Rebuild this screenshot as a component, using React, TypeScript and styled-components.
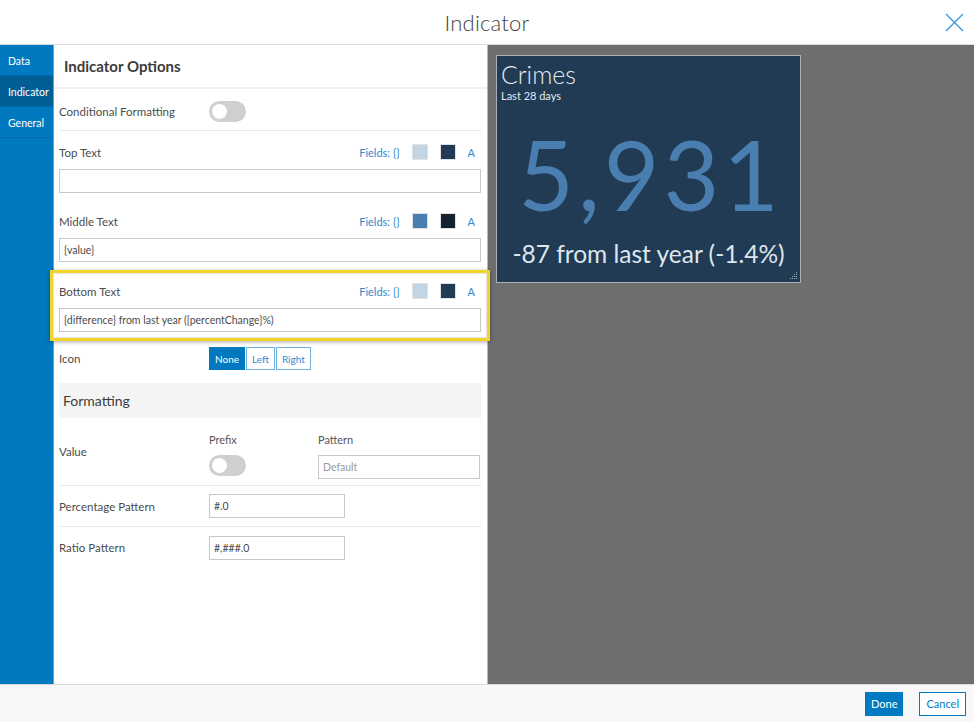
import { createGlobalStyle, styled } from 'styled-components';

const GlobalStyle = createGlobalStyle`
  html, body {
    margin: 0;
    padding: 0;
    background: #ffffff;
  }
  body {
    font-family: Lato, 'Open Sans', sans-serif;
    color: #4c4c4c;
  }
  * {
    box-sizing: border-box;
  }
`;

const tabs = ['Data', 'Indicator', 'General'];

type TextField = {
  label: string;
  value: string;
  light: string;
  dark: string;
};

const topText: TextField = { label: 'Top Text', value: '', light: '#c3d4e3', dark: '#213b54' };
const middleText: TextField = { label: 'Middle Text', value: '{value}', light: '#4a7db0', dark: '#14212e' };
const bottomText: TextField = {
  label: 'Bottom Text',
  value: '{difference} from last year ({percentChange}%)',
  light: '#c3d4e3',
  dark: '#213b54',
};

function FieldBlock({ field }: { field: TextField }) {
  return (
    <>
      <FieldHead>
        <Label>{field.label}</Label>
        <FieldTools>
          <FieldsLink>Fields: {'{}'}</FieldsLink>
          <Swatch $color={field.light} />
          <Swatch $color={field.dark} />
          <FieldsLink>A</FieldsLink>
        </FieldTools>
      </FieldHead>
      <TextInput defaultValue={field.value} />
    </>
  );
}

export default function App() {
  return (
    <Frame>
      <GlobalStyle />
      <Header>
        <span />
        <Title>Indicator</Title>
        <CloseButton aria-label="Close">
          <svg width="19" height="19" viewBox="0 0 19 19">
            <path d="M1 1 L18 18 M18 1 L1 18" stroke="#3a98d8" strokeWidth="1.4" fill="none" />
          </svg>
        </CloseButton>
      </Header>
      <Body>
        <Sidebar>
          {tabs.map((t) => (
            <Tab key={t} $active={t === 'Indicator'}>
              {t}
            </Tab>
          ))}
        </Sidebar>
        <Panel>
          <PanelTitle>Indicator Options</PanelTitle>
          <Content>
            <Row $height={42} $top={4}>
              <RowLabel>Conditional Formatting</RowLabel>
              <Toggle />
            </Row>
            <FieldSection>
              <FieldBlock field={topText} />
            </FieldSection>
            <FieldSection $last>
              <FieldBlock field={middleText} />
            </FieldSection>
            <Highlight>
              <FieldBlock field={bottomText} />
            </Highlight>
            <IconRow>
              <RowLabel>Icon</RowLabel>
              <Segmented>
                <SegButton $active>None</SegButton>
                <SegButton>Left</SegButton>
                <SegButton>Right</SegButton>
              </Segmented>
            </IconRow>
            <SectionHead>Formatting</SectionHead>
            <ValueRow>
              <ValueLabel>Value</ValueLabel>
              <ValueCol $width={109}>
                <SmallLabel>Prefix</SmallLabel>
                <Toggle />
              </ValueCol>
              <ValueCol $width={162}>
                <SmallLabel>Pattern</SmallLabel>
                <TextInput placeholder="Default" />
              </ValueCol>
            </ValueRow>
            <Row $height={41}>
              <RowLabel>Percentage Pattern</RowLabel>
              <ShortInput defaultValue="#.0" />
            </Row>
            <Row $height={41} $plain>
              <RowLabel>Ratio Pattern</RowLabel>
              <ShortInput defaultValue="#,###.0" />
            </Row>
          </Content>
        </Panel>
        <Preview>
          <Card>
            <CardTitle>Crimes</CardTitle>
            <CardSub>Last 28 days</CardSub>
            <BigValue>5,931</BigValue>
            <CardBottom>-87 from last year (-1.4%)</CardBottom>
            <Grip width="9" height="9" viewBox="0 0 9 9">
              <g fill="#9aa7b4">
                <rect x="7" y="1" width="1" height="1" />
                <rect x="5" y="3" width="1" height="1" />
                <rect x="7" y="3" width="1" height="1" />
                <rect x="3" y="5" width="1" height="1" />
                <rect x="5" y="5" width="1" height="1" />
                <rect x="7" y="5" width="1" height="1" />
                <rect x="1" y="7" width="1" height="1" />
                <rect x="3" y="7" width="1" height="1" />
                <rect x="5" y="7" width="1" height="1" />
                <rect x="7" y="7" width="1" height="1" />
              </g>
            </Grip>
          </Card>
        </Preview>
      </Body>
      <Footer>
        <FooterButton $primary>Done</FooterButton>
        <FooterButton>Cancel</FooterButton>
      </Footer>
    </Frame>
  );
}

const Frame = styled.div`
  width: 974px;
  height: 722px;
  display: flex;
  flex-direction: column;
  overflow: hidden;
`;

const Header = styled.div`
  height: 45px;
  flex: none;
  display: grid;
  grid-template-columns: 1fr auto 1fr;
  align-items: center;
  border-bottom: 1px solid #dcdcdc;
`;

const Title = styled.div`
  font-size: 22px;
  font-weight: 300;
  color: #444;
  letter-spacing: 0.2px;
`;

const CloseButton = styled.button`
  justify-self: end;
  margin-right: 10px;
  border: none;
  background: none;
  padding: 0;
  display: flex;
`;

const Body = styled.div`
  flex: 1;
  display: flex;
  min-height: 0;
`;

const Sidebar = styled.div`
  width: 54px;
  flex: none;
  background: #0079c1;
  border-right: 1px solid #5aa7d8;
`;

const Tab = styled.div<{ $active?: boolean }>`
  height: 31px;
  padding: 1px 8px 0;
  display: flex;
  align-items: center;
  font-size: 10.5px;
  color: #fff;
  background: ${(p) => (p.$active ? '#005e95' : 'transparent')};
  border-bottom: 1px solid #006aa9;
`;

const Panel = styled.div`
  width: 434px;
  flex: none;
  background: #fff;
  border-right: 1px solid #b9b9b9;
  display: flex;
  flex-direction: column;
`;

const PanelTitle = styled.div`
  height: 44px;
  padding: 0 10px;
  display: flex;
  align-items: center;
  font-size: 15px;
  font-weight: 700;
  color: #3c3c3c;
  border-bottom: 2px solid #efefef;
`;

const Content = styled.div`
  padding: 0 6px 0 5px;
  display: flex;
  flex-direction: column;
`;

const Row = styled.div<{ $height: number; $plain?: boolean; $top?: number }>`
  height: ${(p) => p.$height}px;
  padding-top: ${(p) => p.$top ?? 0}px;
  display: flex;
  align-items: center;
  border-bottom: ${(p) => (p.$plain ? 'none' : '1px solid #e8e8e8')};
`;

const RowLabel = styled.div`
  width: 150px;
  flex: none;
  font-size: 11.5px;
  color: #4c4c4c;
`;

const ValueLabel = styled(RowLabel)`
  margin-top: 14px;
`;

const Label = styled.div`
  font-size: 11.5px;
  color: #4c4c4c;
`;

const SmallLabel = styled.div`
  font-size: 11px;
  color: #555;
  height: 18px;
  line-height: 18px;
  margin-bottom: 6px;
`;

const Toggle = styled.div`
  width: 37px;
  height: 21px;
  border-radius: 11px;
  background: #cfcfcf;
  position: relative;
  &::after {
    content: '';
    position: absolute;
    left: 3px;
    top: 3px;
    width: 15px;
    height: 15px;
    border-radius: 50%;
    background: #fff;
  }
`;

const FieldSection = styled.div<{ $last?: boolean }>`
  padding: 12px 0 ${(p) => (p.$last ? 8 : 7)}px;
`;

const FieldHead = styled.div`
  height: 18px;
  display: flex;
  align-items: center;
  justify-content: space-between;
  margin-bottom: 8px;
`;

const FieldTools = styled.div`
  display: flex;
  align-items: center;
  gap: 12px;
  padding-right: 6px;
`;

const FieldsLink = styled.span`
  font-size: 11px;
  color: #2f8ad0;
`;

const Swatch = styled.span<{ $color: string }>`
  width: 16px;
  height: 16px;
  background: ${(p) => p.$color};
  border: 1px solid #e2e2e2;
`;

const TextInput = styled.input`
  width: 100%;
  height: 24px;
  border: 1px solid #c8c8c8;
  padding: 0 4px;
  font-family: inherit;
  font-size: 10.5px;
  color: #4c4c4c;
  outline: none;
  &::placeholder {
    color: #9a9a9a;
  }
`;

const ShortInput = styled(TextInput)`
  width: 136px;
  height: 24px;
`;

const Highlight = styled.div`
  position: relative;
  z-index: 1;
  margin: 0 -9px;
  padding: 9px 6px 6px;
  border: 3px solid #f2d52b;
  background: #fff;
  box-shadow: 0 1px 4px rgba(0, 0, 0, 0.35), inset 0 0 0 1px #e4e4e4;
`;

const IconRow = styled.div`
  margin-top: 6px;
  height: 23px;
  display: flex;
  align-items: center;
`;

const Segmented = styled.div`
  display: flex;
  gap: 1px;
`;

const SegButton = styled.button<{ $active?: boolean }>`
  height: 23px;
  padding: 0 5px;
  font-family: inherit;
  font-size: 10px;
  border: 1px solid ${(p) => (p.$active ? '#0079c1' : '#6fb0de')};
  background: ${(p) => (p.$active ? '#0079c1' : '#fff')};
  color: ${(p) => (p.$active ? '#fff' : '#2f8ad0')};
`;

const SectionHead = styled.div`
  margin-top: 13px;
  height: 35px;
  padding: 0 4px;
  display: flex;
  align-items: center;
  background: #f4f4f4;
  font-size: 14px;
  color: #3c3c3c;
`;

const ValueRow = styled.div`
  height: 68px;
  padding-top: 13px;
  display: flex;
  align-items: flex-start;
  border-bottom: 1px solid #e8e8e8;
`;

const ValueCol = styled.div<{ $width: number }>`
  width: ${(p) => p.$width}px;
  display: flex;
  flex-direction: column;
  align-items: flex-start;
`;

const Preview = styled.div`
  flex: 1;
  background: #6e6e6e;
  padding: 10px 8px;
`;

const Card = styled.div`
  position: relative;
  width: 305px;
  height: 228px;
  background: #213b54;
  border: 1px solid #a9b1b8;
  padding: 3px 4px;
  display: flex;
  flex-direction: column;
  color: #e3eaf1;
`;

const CardTitle = styled.div`
  font-size: 25px;
  font-weight: 300;
  line-height: 30px;
`;

const CardSub = styled.div`
  font-size: 11px;
  line-height: 14px;
`;

const BigValue = styled.div`
  margin-top: 16px;
  font-size: 96px;
  line-height: 110px;
  letter-spacing: 4px;
  padding-left: 4px;
  text-align: center;
  color: #4a7db0;
`;

const CardBottom = styled.div`
  margin-top: 10px;
  font-size: 24.5px;
  text-align: center;
  color: #dde6ee;
`;

const Grip = styled.svg`
  position: absolute;
  right: 2px;
  bottom: 2px;
`;

const Footer = styled.div`
  height: 38px;
  flex: none;
  background: #f7f7f7;
  border-top: 1px solid #dcdcdc;
  display: flex;
  align-items: center;
  justify-content: flex-end;
  gap: 16px;
  padding-right: 8px;
`;

const FooterButton = styled.button<{ $primary?: boolean }>`
  height: 24px;
  padding: 0 ${(p) => (p.$primary ? 5 : 6)}px;
  font-family: inherit;
  font-size: 11px;
  border: 1px solid #0079c1;
  background: ${(p) => (p.$primary ? '#0079c1' : '#fff')};
  color: ${(p) => (p.$primary ? '#fff' : '#0079c1')};
`;
